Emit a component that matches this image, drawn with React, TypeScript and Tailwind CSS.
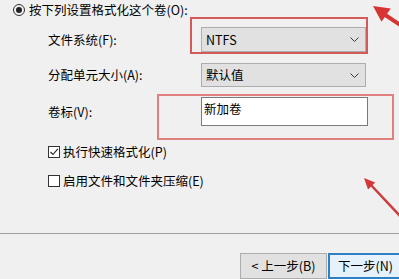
import React from 'react';

const Chevron: React.FC = () => (
  <svg width="9" height="5" viewBox="0 0 9 5" className="shrink-0">
    <path d="M0.5 0.5 L4.5 4.5 L8.5 0.5" fill="none" stroke="#3a3a3a" strokeWidth="1" />
  </svg>
);

const ComboBox: React.FC<{ value: string; tall?: boolean }> = ({ value, tall }) => (
  <div
    className={`flex w-[165px] items-center justify-between border border-[#adadad] bg-[#e1e1e1] pl-[4px] pr-[6px] ${
      tall ? 'h-[25px]' : 'h-[24px]'
    }`}
  >
    <span>{value}</span>
    <Chevron />
  </div>
);

const Row: React.FC<{ label: string; className?: string; children: React.ReactNode }> = ({
  label,
  className,
  children,
}) => (
  <div className={`flex items-center pl-[48px] ${className ?? ''}`}>
    <span className="w-[153px]">{label}</span>
    {children}
  </div>
);

const App: React.FC = () => {
  return (
    <div
      className="relative h-[279px] w-[399px] overflow-hidden bg-[#f0f0f0] text-[12.5px] leading-[16px] text-black"
      style={{ fontFamily: '"Noto Sans CJK SC", "Noto Sans", sans-serif' }}
    >
      {/* Radio option */}
      <div className="flex h-[20px] items-center pl-[13px]">
        <span className="flex h-[12px] w-[12px] items-center justify-center rounded-full border border-[#333]">
          <span className="h-[6px] w-[6px] rounded-full bg-[#222]" />
        </span>
        <span className="ml-[4px]">按下列设置格式化这个卷(O):</span>
      </div>

      <Row label="文件系统(F):" className="mt-[7px]">
        <ComboBox value="NTFS" tall />
      </Row>

      <Row label="分配单元大小(A):" className="mt-[11px]">
        <ComboBox value="默认值" />
      </Row>

      <Row label="卷标(V):" className="mt-[10px]">
        <div className="flex h-[29px] w-[167px] items-start border border-[#7a7a7a] bg-white pl-[2px] pt-[3px]">
          新加卷
        </div>
      </Row>

      {/* Checkboxes */}
      <div className="mt-[18px] flex h-[16px] items-center pl-[48px]">
        <span className="flex h-[12px] w-[12px] items-center justify-center border border-[#333] bg-white">
          <svg width="10" height="10" viewBox="0 0 10 10">
            <path d="M1.5 5 L4 7.5 L8.8 1.8" fill="none" stroke="#222" strokeWidth="1.1" />
          </svg>
        </span>
        <span className="ml-[3px]">执行快速格式化(P)</span>
      </div>
      <div className="mt-[13px] flex h-[16px] items-center pl-[48px]">
        <span className="h-[12px] w-[12px] border border-[#333] bg-white" />
        <span className="ml-[3px]">启用文件和文件夹压缩(E)</span>
      </div>

      {/* Separator */}
      <div className="mt-[44px] h-px w-full bg-[#a0a0a0]" />

      {/* Buttons */}
      <div className="mt-[19px] flex pl-[240px]">
        <button className="flex h-[26px] w-[87px] shrink-0 items-center justify-center whitespace-nowrap border border-[#adadad] bg-[#e1e1e1] text-[12.5px]">
          &lt; 上一步(B)
        </button>
        <button className="ml-px flex h-[26px] w-[87px] shrink-0 items-center whitespace-nowrap border-2 border-[#2f7fc4] bg-[#e5f1fb] pl-[8px] text-[12.5px]">
          下一步(N)
        </button>
      </div>

      {/* Red annotation boxes */}
      <div className="pointer-events-none absolute left-[190px] top-[17px] h-[37px] w-[178px] border-2 border-[#d45a5a]" />
      <div className="pointer-events-none absolute left-[157px] top-[94px] h-[46px] w-[237px] border-2 border-[#e08080]" />

      {/* Red arrows */}
      <svg className="pointer-events-none absolute left-0 top-0" width="399" height="279" viewBox="0 0 399 279">
        <line x1="402" y1="26" x2="383" y2="13.5" stroke="#d83434" strokeWidth="4" />
        <polygon points="373,6 390.7,8.5 381.5,21.7" fill="#d83434" />
        <line x1="400" y1="216" x2="370" y2="184" stroke="#cc3d3d" strokeWidth="2.5" />
        <polygon points="364,178 375.2,182.6 368,189.4" fill="#d23a3a" />
      </svg>
    </div>
  );
};

export default App;
